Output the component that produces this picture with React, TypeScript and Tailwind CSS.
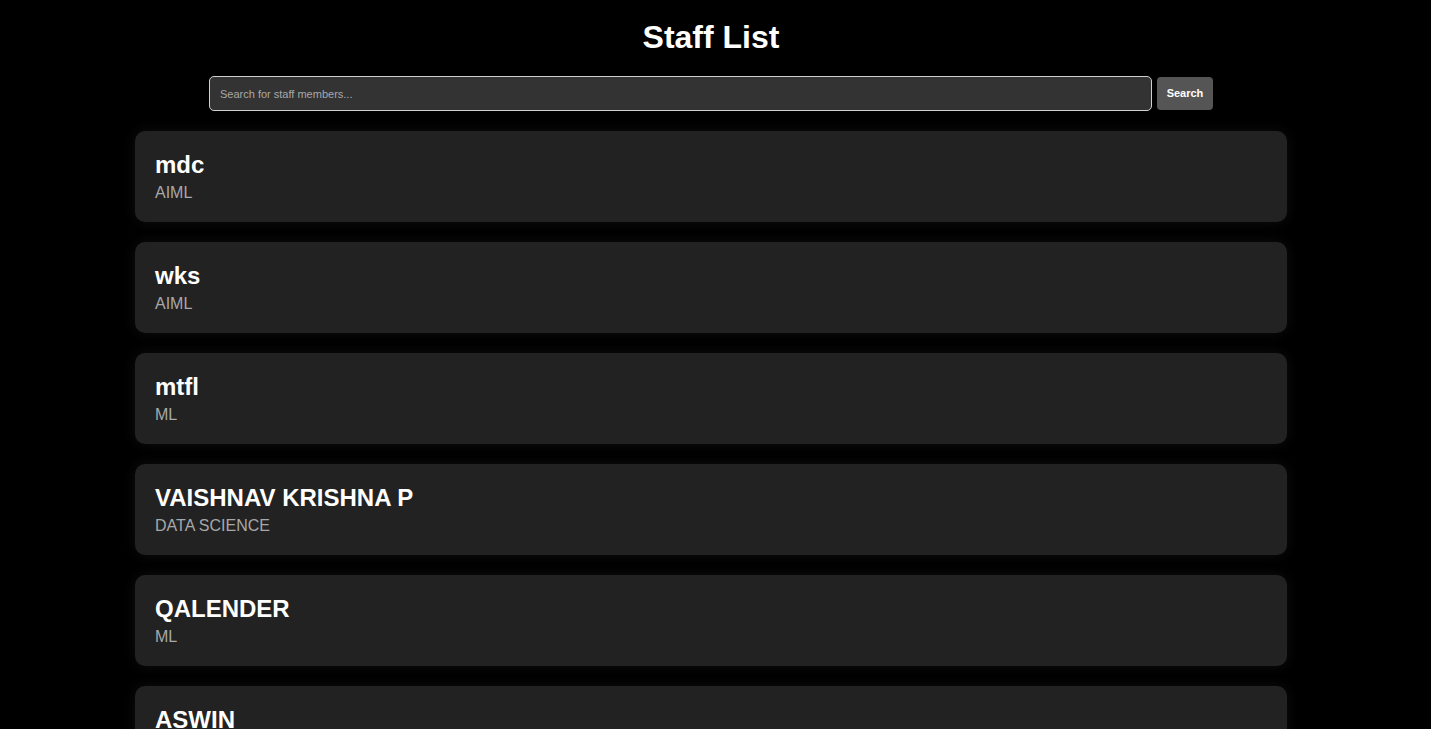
import React from 'react';

const staff = [
  { name: 'mdc', dept: 'AIML' },
  { name: 'wks', dept: 'AIML' },
  { name: 'mtfl', dept: 'ML' },
  { name: 'VAISHNAV KRISHNA P', dept: 'DATA SCIENCE' },
  { name: 'QALENDER', dept: 'ML' },
  { name: 'ASWIN', dept: 'AIML' },
];

export default function App() {
  return (
    <div className="min-h-screen bg-black text-white font-['Liberation_Sans',Arial,sans-serif] pr-[9px]">
      <h1 className="pt-[19px] text-center text-[32px] leading-[37px] font-bold">Staff List</h1>

      <div className="mt-[20px] flex items-center justify-center gap-[5px]">
        <input
          type="text"
          placeholder="Search for staff members..."
          className="w-[943px] h-[35px] px-[10px] rounded-[5px] border border-[#d0d0d0] bg-[#333333] text-[11px] text-white placeholder:text-[#a8a8a8] outline-none"
        />
        <button className="h-[33px] w-[56px] rounded-[4px] bg-[#555555] text-[11px] font-bold text-white">
          Search
        </button>
      </div>

      <div className="mt-[20px] mx-auto w-[1152px] flex flex-col gap-[20px] pb-[20px]">
        {staff.map((s) => (
          <div
            key={s.name}
            className="rounded-[10px] bg-[#222222] p-[20px] shadow-[0_0_14px_rgba(255,255,255,0.06)]"
          >
            <h2 className="text-[24px] leading-[28px] font-bold mb-[5px]">{s.name}</h2>
            <p className="text-[16px] leading-[18px] text-[#a8a8a8]">{s.dept}</p>
          </div>
        ))}
      </div>
    </div>
  );
}
